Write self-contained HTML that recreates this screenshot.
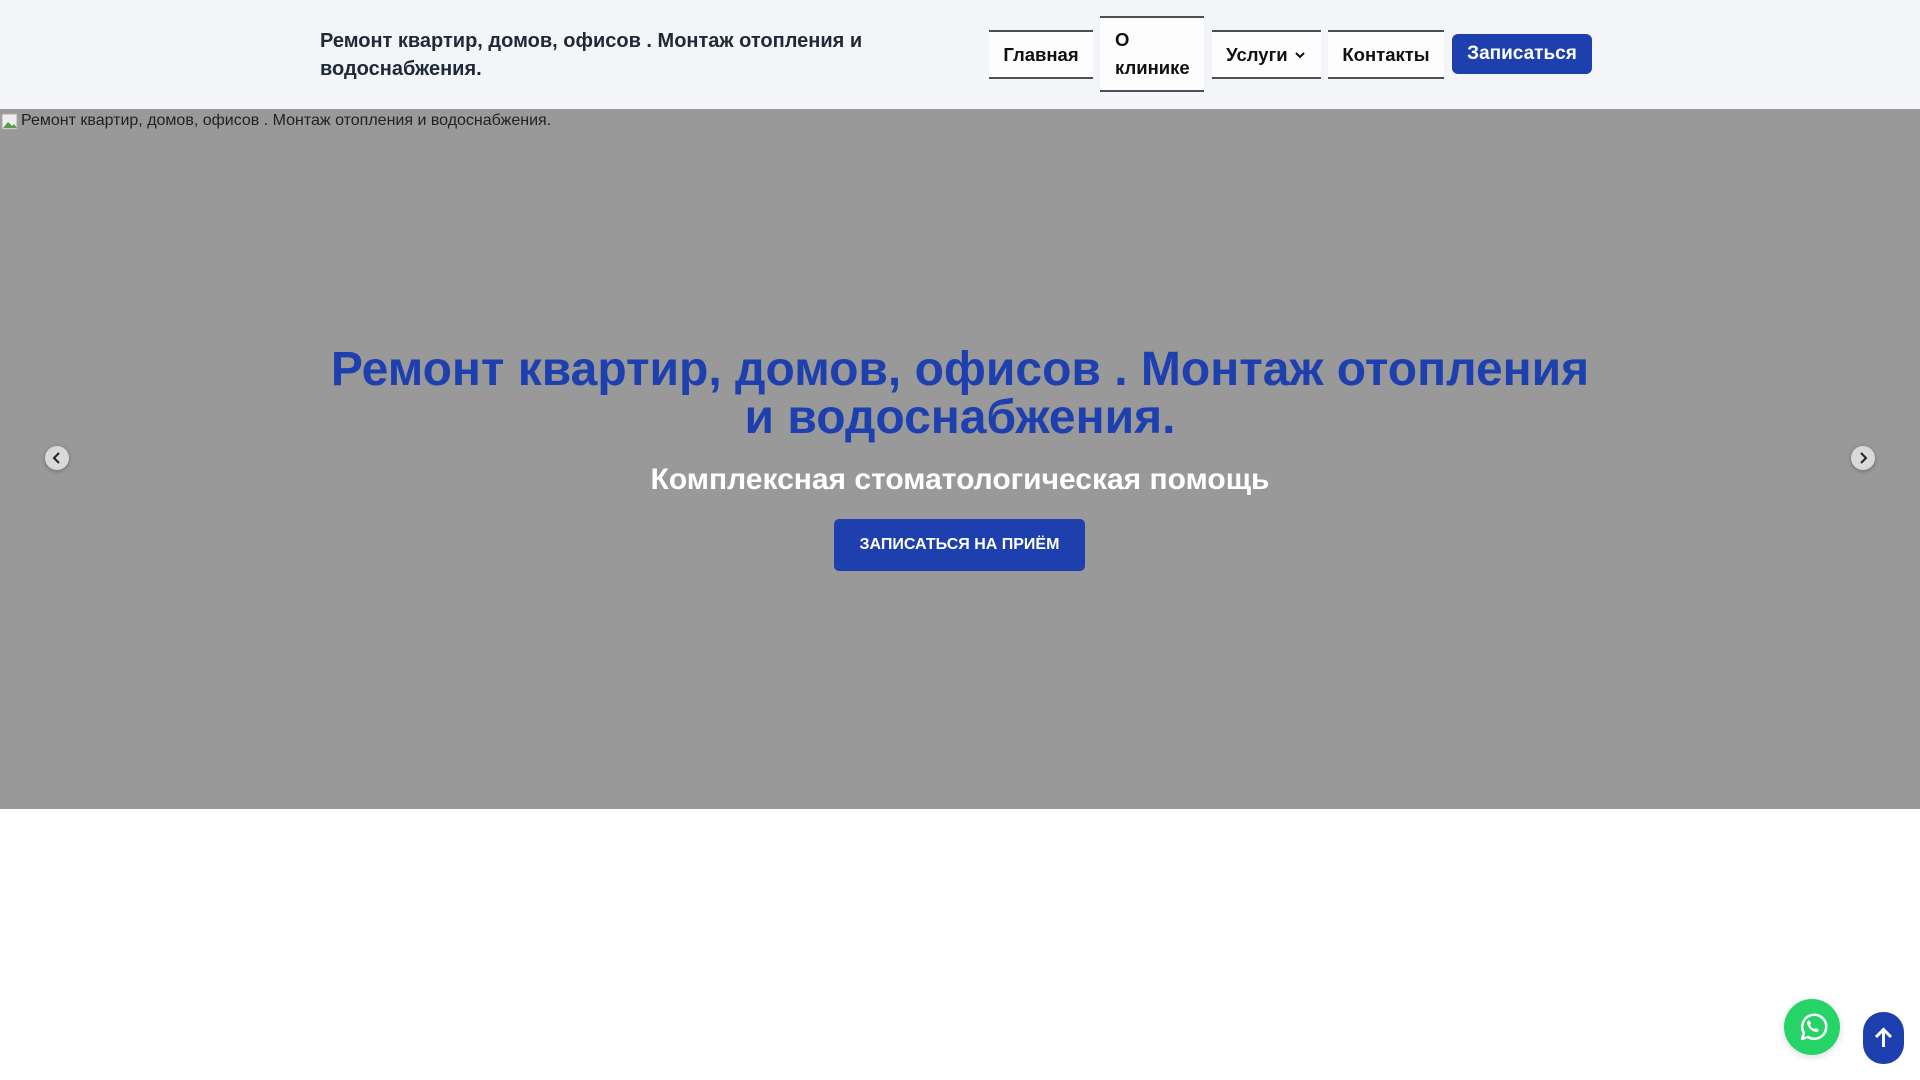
<!DOCTYPE html>
<html><head><meta charset="utf-8"><style>
*{margin:0;padding:0;box-sizing:border-box}
body{width:1920px;height:1080px;overflow:hidden;background:#fff;font-family:"Liberation Sans",sans-serif;position:relative}
header{position:absolute;left:0;top:0;width:1920px;height:109px;background:#f3f5f9}
.brand{position:absolute;left:320px;top:27px;font-size:20px;font-weight:bold;color:#1f2937;line-height:28px;width:580px}
.nav{position:absolute;top:30px;height:49px;background:#fdfdfe;border-top:2px solid #4b5057;border-bottom:2px solid #4b5057;font-size:18.5px;font-weight:bold;color:#111;display:flex;align-items:center;justify-content:center}
.cta{position:absolute;left:1452px;top:34px;width:140px;height:40px;background:#1e40af;color:#fff;border-radius:6px;font-size:19px;font-weight:bold;display:flex;align-items:center;justify-content:center}
.hero{position:absolute;left:0;top:109px;width:1920px;height:700px;background:#999}
.alt{position:absolute;left:0;top:112px;font-size:16px;color:#222;padding-left:21px}
.alt svg{position:absolute;left:1px;top:1px}
h1{position:absolute;left:325px;width:1270px;top:346px;text-align:center;font-size:48px;line-height:48px;color:#1e40af}
h2{position:absolute;left:0;width:1920px;top:463px;text-align:center;font-size:30px;color:#fff}
.btn{position:absolute;left:834px;top:519px;width:251px;height:52px;background:#1e40af;border-radius:5px;color:#fff;font-weight:bold;font-size:16px;display:flex;align-items:center;justify-content:center}
.arr{position:absolute;top:446px;width:24px;height:24px;border-radius:50%;background:#d9d9d9;box-shadow:0 1px 4px rgba(0,0,0,.3)}
.wa{position:absolute;left:1784px;top:999px;width:56px;height:56px;border-radius:50%;background:#25d366;box-shadow:0 2px 8px rgba(0,0,0,.15)}
.up{position:absolute;left:1863px;top:1012px;width:41px;height:52px;border-radius:20px;background:#1e40af}
</style></head><body>
<header>
<div class="brand">Ремонт квартир, домов, офисов . Монтаж отопления и водоснабжения.</div>
<div class="nav" style="left:989px;width:104px">Главная</div>
<div class="nav" style="left:1100px;top:16px;height:76px;width:104px;justify-content:flex-start;padding-left:15px;line-height:28px">О<br>клинике</div>
<div class="nav" style="left:1212px;width:109px">Услуги&nbsp;<svg width="14" height="10" viewBox="0 0 14 10"><path d="M3 3l4 4 4-4" stroke="#111" stroke-width="2" fill="none"/></svg></div>
<div class="nav" style="left:1328px;width:116px">Контакты</div>
<div class="cta">Записаться</div>
</header>
<div class="hero"></div>
<div class="alt"><svg width="18" height="18" viewBox="0 0 18 18"><rect x="1" y="1" width="15" height="15" fill="#eee" stroke="#aaa"/><path d="M2 15l5-6 4 4 2-2 3 4z" fill="#5a9a4a"/></svg>Ремонт квартир, домов, офисов . Монтаж отопления и водоснабжения.</div>
<h1>Ремонт квартир, домов, офисов . Монтаж отопления и водоснабжения.</h1>
<h2>Комплексная стоматологическая помощь</h2>
<div class="btn">ЗАПИСАТЬСЯ НА ПРИЁМ</div>
<div class="arr" style="left:45px"><svg width="24" height="24"><path d="M14 7l-5 5 5 5" stroke="#222" stroke-width="2" fill="none"/></svg></div>
<div class="arr" style="left:1851px"><svg width="24" height="24"><path d="M10 7l5 5-5 5" stroke="#222" stroke-width="2" fill="none"/></svg></div>
<div class="wa"><svg width="56" height="56" viewBox="0 0 56 56"><path d="M18 40l2-6a12 12 0 1 1 4 4z" stroke="#fff" stroke-width="2.5" fill="none" stroke-linejoin="round"/><path d="M23 23c0 5 5 10 10 10l2-2-3-2-2 1c-2-1-3-2-4-4l1-2-2-3z" fill="#fff"/></svg></div>
<div class="up"><svg width="41" height="52" viewBox="0 0 41 52"><path d="M20.5 35V18M13 25l7.5-7.5L28 25" stroke="#fff" stroke-width="3" fill="none"/></svg></div>
</body></html>
